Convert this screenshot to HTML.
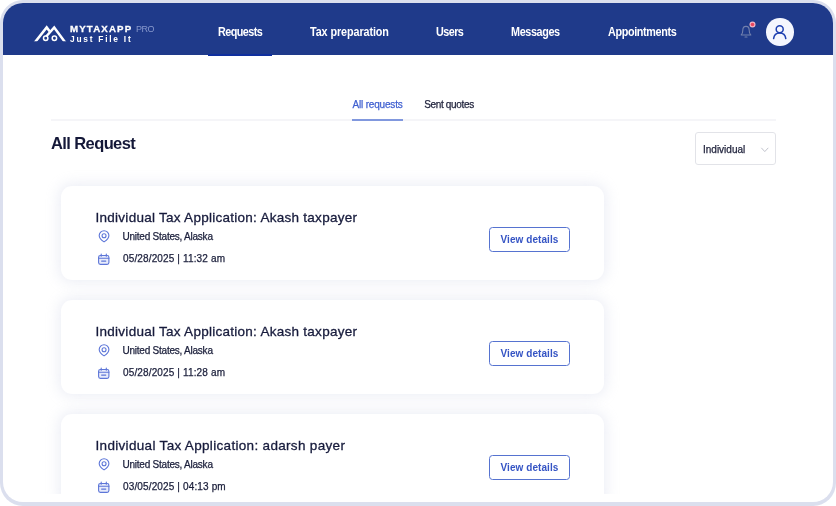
<!DOCTYPE html>
<html lang="en">
<head>
<meta charset="utf-8">
<title>MyTaxApp Pro - All Request</title>
<style>
*{box-sizing:border-box;margin:0;padding:0}
html,body{width:836px;height:506px;overflow:hidden;background:#fff}
body{font-family:"Liberation Sans",sans-serif;color:#1b1f3b;position:relative}
.frame{position:absolute;left:0;top:0;width:836px;height:506px;border-radius:23px;background:#dbdfee;overflow:hidden}
.screen{position:absolute;left:3px;top:3px;width:830px;height:499px;border-radius:20px;background:#fff;overflow:hidden}
.clip{position:absolute;left:0;top:0;width:830px;height:491px;overflow:hidden;will-change:transform}
.hdr{position:absolute;left:0;top:0;width:830px;height:52px;background:#1f3a8a}
.hdr .ul{position:absolute;left:205px;top:51px;width:64px;height:2px;background:#0f2f9e}
.nav{position:absolute;top:21.3px;height:16px;line-height:16px;font-size:12px;font-weight:bold;color:#fff;white-space:nowrap;transform:scaleX(0.9);transform-origin:0 0}
#n1{left:215px;letter-spacing:-0.6px}
#n2{left:307px;letter-spacing:-0.1px}
#n3{left:433.2px;letter-spacing:-0.6px}
#n4{left:508.2px;letter-spacing:-0.4px}
#n5{left:604.5px;letter-spacing:-0.4px}
.logo-t{position:absolute;left:67px;top:21.2px;font-size:9.7px;font-weight:bold;color:#fff;-webkit-text-stroke:0.3px #fff;letter-spacing:1.15px;line-height:10px;white-space:nowrap}
.logo-s{position:absolute;left:67px;top:30.6px;font-size:8.4px;font-weight:bold;color:#fff;letter-spacing:1.75px;line-height:10px;white-space:nowrap}
.logo-p{position:absolute;left:133px;top:21px;font-size:9px;color:#8798cc;line-height:10px;letter-spacing:-0.55px}
.tabs{position:absolute;left:48px;top:116px;width:725px;height:2px;background:#f5f5f8}
.tab{position:absolute;top:96.3px;font-size:10px;line-height:12px;white-space:nowrap;color:#23263f}
.tab.a{color:#3f5fd0}
#t1{left:349.5px;letter-spacing:-0.18px}
#t2{left:421.2px;letter-spacing:-0.34px}
.tabul{position:absolute;left:349px;top:116px;width:51px;height:2px;background:#8198de}
h1{position:absolute;left:48px;top:130px;font-size:16.5px;line-height:20px;font-weight:bold;color:#141838;letter-spacing:-0.6px;white-space:nowrap}
.sel{position:absolute;left:691.5px;top:129px;width:81.5px;height:33.3px;border:1px solid #e2e3e8;border-radius:3px;background:#fff}
.sel span{position:absolute;left:7.5px;top:10.5px;font-size:10px;line-height:12px;color:#23263f;white-space:nowrap}
.sel svg{position:absolute;left:64.5px;top:12.5px}
.card{position:absolute;left:58px;width:542.7px;height:93.7px;border-radius:11px;background:#fff;box-shadow:0 0 14px 2px rgba(208,212,232,0.42)}
.card .t{position:absolute;left:34.5px;top:23.4px;font-size:13.5px;line-height:16px;color:#171b3c;white-space:nowrap;letter-spacing:0.27px}
#c3 .t{letter-spacing:0.32px}
.card .l,.card .d,.tab,.sel span{-webkit-text-stroke:0.25px currentColor}
.card .t{-webkit-text-stroke:0.3px currentColor}
.card .l{position:absolute;left:61.5px;top:44.7px;font-size:10px;line-height:12px;color:#1b1f3b;white-space:nowrap;letter-spacing:-0.23px}
.card .d{position:absolute;left:62px;top:67.3px;font-size:10px;line-height:12px;color:#1b1f3b;white-space:nowrap;letter-spacing:0.14px}
.card .i1{position:absolute;left:36px;top:42.5px}
.card .i2{position:absolute;left:36px;top:65.5px}
.btn{position:absolute;left:428px;top:41px;width:81px;height:25px;border:1px solid #5673d0;border-radius:3.5px;color:#3554c4;font-size:10px;line-height:24px;text-align:center;font-weight:bold;white-space:nowrap;letter-spacing:0.07px}
</style>
</head>
<body>
<div class="frame"><div class="screen"><div class="clip">
  <div class="hdr">
    <svg style="position:absolute;left:30px;top:21px" width="34" height="19" viewBox="33 24 34 19"><clipPath id="lc"><rect x="30" y="20" width="40" height="21.3"/></clipPath><g clip-path="url(#lc)" fill="none" stroke="#fff" stroke-width="2.5" stroke-linejoin="miter" stroke-miterlimit="8"><path d="M34.2 43.2 L46.7 27.4 L49.6 31.2"/><path d="M46.2 36.5 L54.2 27.4 L65.8 43.2"/></g><circle cx="45.7" cy="38.2" r="2.2" fill="#1f3a8a" stroke="#fff" stroke-width="1.5"/><circle cx="54.4" cy="38.2" r="2.2" fill="#1f3a8a" stroke="#fff" stroke-width="1.5"/></svg>
    <div class="logo-t" id="lt">MYTAXAPP</div>
    <div class="logo-p" id="lp">PRO</div>
    <div class="logo-s" id="ls">Just File It</div>
    <div class="nav" id="n1">Requests</div>
    <div class="nav" id="n2">Tax preparation</div>
    <div class="nav" id="n3">Users</div>
    <div class="nav" id="n4">Messages</div>
    <div class="nav" id="n5">Appointments</div>
    <div class="ul"></div>
    <svg style="position:absolute;left:735px;top:18px" width="20" height="20" viewBox="738 21 20 20"><path d="M741.2 35 h9.6 c-1.3-1.1-1.6-2.3-1.6-4.7 c0-2.4-1.3-3.9-3.2-3.9 s-3.2 1.5-3.2 3.9 c0 2.4-0.3 3.6-1.6 4.7z M745 37 h2" fill="none" stroke="#7381ad" stroke-width="1.1" stroke-linecap="round" stroke-linejoin="round"/><circle cx="752.5" cy="24.5" r="3" fill="#f0b4c4"/><circle cx="752.5" cy="24.5" r="1.8" fill="#e8455f"/></svg>
    <div style="position:absolute;left:763px;top:15px;width:27.5px;height:27.5px;border-radius:50%;background:#f4f6fe"></div>
    <svg style="position:absolute;left:763px;top:15px" width="28" height="28" viewBox="0 0 28 28"><circle cx="13.7" cy="11.3" r="3.5" fill="none" stroke="#1d3fb0" stroke-width="1.5"/><path d="M7.6 20.6 c0.5-3.8 3.2-5.6 6.1-5.6 s5.6 1.8 6.1 5.6" fill="none" stroke="#1d3fb0" stroke-width="1.5" stroke-linecap="round"/></svg>
  </div>
  <div class="tabs"></div>
  <div class="tab a" id="t1">All requests</div>
  <div class="tab" id="t2">Sent quotes</div>
  <div class="tabul"></div>
  <h1 id="h1">All Request</h1>
  <div class="sel"><span id="sl">Individual</span><svg width="10" height="8" viewBox="0 0 10 8"><path d="M1.3 1.8 L4.8 5.6 L8.3 1.8" fill="none" stroke="#c0c2cc" stroke-width="1"/></svg></div>

  <div class="card" id="c1" style="top:183.2px">
    <div class="t">Individual Tax Application: Akash taxpayer</div>
    <svg class="i1" width="14" height="15" viewBox="97 228.5 14 15"><path d="M104.05 241.4 C102.3 240.3 99.2 238 99.2 235.1 a4.85 4.85 0 0 1 9.7 0 C108.9 238 105.8 240.3 104.05 241.4z" fill="none" stroke="#5d76d8" stroke-width="1.1" stroke-linejoin="round"/><circle cx="104.05" cy="235.3" r="2" fill="none" stroke="#5d76d8" stroke-width="1.1"/></svg>
    <div class="l">United States, Alaska</div>
    <svg class="i2" width="14" height="15" viewBox="97 251.8 14 15"><rect x="98.6" y="255.3" width="10.3" height="8.9" rx="1.8" fill="#e8ecfb" stroke="#5d76d8" stroke-width="1.1"/><path d="M98.6 258 h10.3 M101.2 253.8 v2.2 M106.3 253.8 v2.2 M101.6 260.9 h4.2" fill="none" stroke="#5d76d8" stroke-width="1.1" stroke-linecap="round"/></svg>
    <div class="d">05/28/2025 | 11:32 am</div>
    <div class="btn"><span>View details</span></div>
  </div>

  <div class="card" id="c2" style="top:297.2px">
    <div class="t">Individual Tax Application: Akash taxpayer</div>
    <svg class="i1" width="14" height="15" viewBox="97 228.5 14 15"><path d="M104.05 241.4 C102.3 240.3 99.2 238 99.2 235.1 a4.85 4.85 0 0 1 9.7 0 C108.9 238 105.8 240.3 104.05 241.4z" fill="none" stroke="#5d76d8" stroke-width="1.1" stroke-linejoin="round"/><circle cx="104.05" cy="235.3" r="2" fill="none" stroke="#5d76d8" stroke-width="1.1"/></svg>
    <div class="l">United States, Alaska</div>
    <svg class="i2" width="14" height="15" viewBox="97 251.8 14 15"><rect x="98.6" y="255.3" width="10.3" height="8.9" rx="1.8" fill="#e8ecfb" stroke="#5d76d8" stroke-width="1.1"/><path d="M98.6 258 h10.3 M101.2 253.8 v2.2 M106.3 253.8 v2.2 M101.6 260.9 h4.2" fill="none" stroke="#5d76d8" stroke-width="1.1" stroke-linecap="round"/></svg>
    <div class="d">05/28/2025 | 11:28 am</div>
    <div class="btn"><span>View details</span></div>
  </div>

  <div class="card" id="c3" style="top:411.2px">
    <div class="t">Individual Tax Application: adarsh payer</div>
    <svg class="i1" width="14" height="15" viewBox="97 228.5 14 15"><path d="M104.05 241.4 C102.3 240.3 99.2 238 99.2 235.1 a4.85 4.85 0 0 1 9.7 0 C108.9 238 105.8 240.3 104.05 241.4z" fill="none" stroke="#5d76d8" stroke-width="1.1" stroke-linejoin="round"/><circle cx="104.05" cy="235.3" r="2" fill="none" stroke="#5d76d8" stroke-width="1.1"/></svg>
    <div class="l">United States, Alaska</div>
    <svg class="i2" width="14" height="15" viewBox="97 251.8 14 15"><rect x="98.6" y="255.3" width="10.3" height="8.9" rx="1.8" fill="#e8ecfb" stroke="#5d76d8" stroke-width="1.1"/><path d="M98.6 258 h10.3 M101.2 253.8 v2.2 M106.3 253.8 v2.2 M101.6 260.9 h4.2" fill="none" stroke="#5d76d8" stroke-width="1.1" stroke-linecap="round"/></svg>
    <div class="d">03/05/2025 | 04:13 pm</div>
    <div class="btn"><span>View details</span></div>
  </div>
</div></div></div>
</body>
</html>
